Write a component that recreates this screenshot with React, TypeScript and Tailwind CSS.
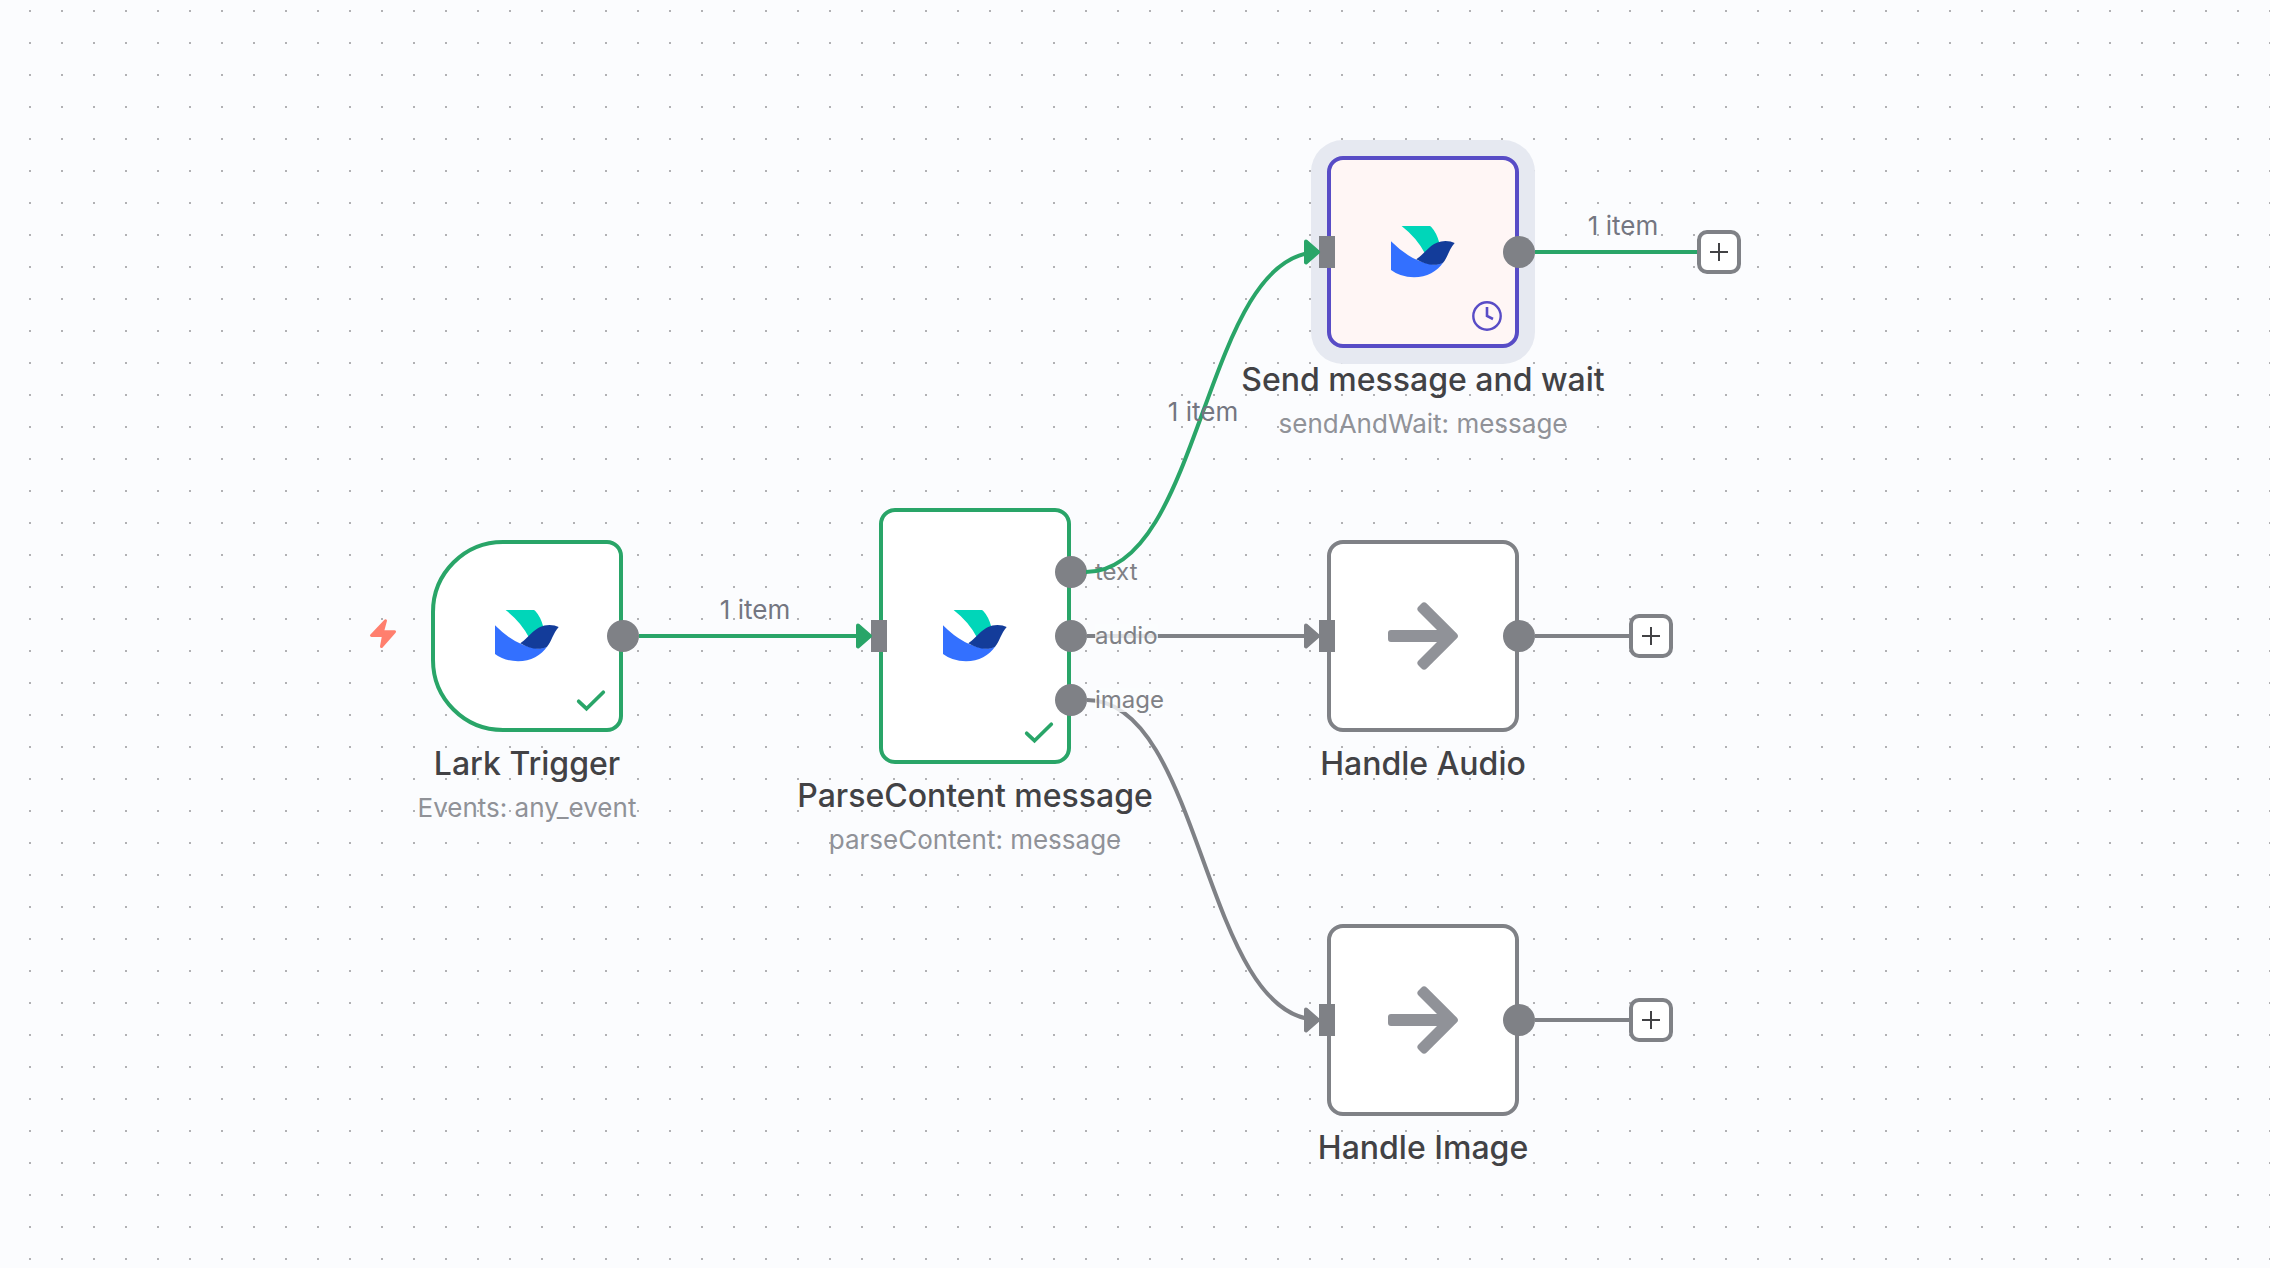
import React from 'react';

type Tone = 'success' | 'idle' | 'waiting';

const borderTone: Record<Tone, string> = {
  success: 'border-[#29a568]',
  idle: 'border-[#7f8186]',
  waiting: 'border-[#584cc6]',
};

function BirdIcon() {
  return (
    <svg className="size-16" viewBox="0 0 64 64" aria-hidden="true">
      <path d="M10.600 6H38.500Q39.500 6 40.300 7Q45.500 12.500 48.200 22.500L34 33.500Q26 18 10.600 6Z" fill="#00d6b9" />
      <path d="M0 21.300Q21 42.500 43 44.500Q50 44.500 52.500 42C46 51.500 36 57.300 23 57.300Q9 57 0 50Z" fill="#3370ff" />
      <path d="M25.300 39.300C35 33 40 21 54.500 21Q60 21 63.700 23C58 29 56.500 38 52 42.700C45 46.500 34 45 25.300 39.300Z" fill="#133c9a" />
    </svg>
  );
}

function ArrowIcon() {
  return (
    <svg className="size-20" viewBox="0 0 80 80" fill="#909298" aria-hidden="true">
      <path d="M8 34H54L35.500 15.500Q33 13 35.500 10.500L38.500 7.500Q41 5 43.700 7.500L74 37.700Q76 40 74 42.300L43.700 72.500Q41 75 38.500 72.500L35.500 69.500Q33 67 35.500 64.500L54 46H8Q5 46 5 43V37Q5 34 8 34Z" />
    </svg>
  );
}

function CheckIcon() {
  return (
    <svg className="size-8" viewBox="0 0 32 32" fill="none" stroke="#29a568" strokeWidth="3.700" strokeLinecap="round" aria-hidden="true">
      <path d="M3.700 17.300L11.500 24.700L28.300 8.300" />
    </svg>
  );
}

function ClockIcon() {
  return (
    <svg className="size-8" viewBox="0 0 32 32" fill="none" stroke="#584cc6" aria-hidden="true">
      <circle cx="16" cy="16" r="13.700" strokeWidth="2.400" />
      <path d="M16 7V16L22 19" strokeWidth="2.600" />
    </svg>
  );
}

function BoltIcon() {
  return (
    <svg className="size-8" viewBox="0 0 32 32" fill="#ff7f6e" stroke="#ff7f6e" strokeWidth="3" strokeLinejoin="round" aria-hidden="true">
      <path d="M18.500 2.700L4.500 17.500H16.500L14.500 28.500L27.500 13.700H15.500Z" />
    </svg>
  );
}

interface NodeProps {
  place: string;
  title: string;
  subtitle?: string;
  tone: Tone;
  shape?: string;
  input?: boolean;
  outputs?: string[];
  icon: React.ReactNode;
  status?: React.ReactNode;
}

function FlowNode({ place, title, subtitle, tone, shape = 'h-48 rounded-2xl bg-white', input = true, outputs = [''], icon, status }: NodeProps) {
  return (
    <article className={`absolute flex w-48 flex-col items-center ${place}`}>
      <div className={`relative flex w-full items-center justify-center border-4 ${borderTone[tone]} ${shape}`}>
        {icon}
        {status && <span className="absolute right-3 bottom-3">{status}</span>}
        {input && <span className="absolute top-1/2 -left-3 h-8 w-4 -translate-y-1/2 bg-[#7f8186]" />}
        <div className="absolute inset-y-0 -right-5 flex flex-col justify-center gap-8">
          {outputs.map((name) => (
            <div key={name} className="relative size-8 rounded-full bg-[#7f8186]">
              {name && (
                <span className={`absolute top-1 left-10 h-6 text-2xl leading-6 text-[#7f8186] ${name === 'text' ? '' : 'bg-[#fbfcfe]/80'}`}>
                  {name}
                </span>
              )}
            </div>
          ))}
        </div>
      </div>
      <h2 className="mt-3 text-[32px] leading-10 font-medium whitespace-nowrap text-[#424245]">{title}</h2>
      {subtitle && <p className="mt-2 text-[26px] leading-8 whitespace-nowrap text-[#909298]">{subtitle}</p>}
    </article>
  );
}

function Edge({ d, tip, color }: { d: string; tip: [number, number]; color: string }) {
  const [x, y] = tip;
  return (
    <g stroke={color} fill="none">
      <path d={d} strokeWidth="4" />
      <path d={`M${x - 12} ${y - 10.5}L${x} ${y}L${x - 12} ${y + 10.5}Z`} fill={color} strokeWidth="4" strokeLinejoin="round" />
    </g>
  );
}

function AddButton({ place }: { place: string }) {
  return (
    <button type="button" aria-label="Add node" className={`absolute flex size-11 items-center justify-center rounded-[10px] border-4 border-[#7f8186] bg-white ${place}`}>
      <svg className="size-5" viewBox="0 0 20 20" stroke="#424245" strokeWidth="2" aria-hidden="true">
        <path d="M1 10H19M10 1V19" />
      </svg>
    </button>
  );
}

function ItemCount({ place }: { place: string }) {
  return <span className={`absolute -translate-x-1/2 text-[26px] leading-8 whitespace-nowrap text-[#747681] ${place}`}>1 item</span>;
}

export default function App() {
  return (
    <main className="relative min-h-screen w-full overflow-hidden bg-[#fbfcfe] font-['Inter',sans-serif]">
      <svg className="absolute inset-0 h-full w-full" aria-hidden="true">
        <defs>
          <pattern id="dots" x="29" y="10" width="32" height="32" patternUnits="userSpaceOnUse">
            <rect width="2" height="2" fill="#b1b1b4" />
          </pattern>
        </defs>
        <rect width="100%" height="100%" fill="url(#dots)" />
        <Edge d="M1087 636H1310" tip={[1318, 636]} color="#7f8186" />
        <Edge d="M1087 700C1203 700 1203 1020 1319 1020" tip={[1318, 1020]} color="#7f8186" />
        <path d="M1535 636H1632M1535 1020H1632" stroke="#7f8186" strokeWidth="4" />
        <path d="M1535 252H1700" stroke="#29a568" strokeWidth="4" />
      </svg>

      <FlowNode place="top-[540px] left-[431px]" title="Lark Trigger" subtitle="Events: any_event" tone="success" shape="h-48 rounded-l-[72px] rounded-r-2xl bg-white" input={false} icon={<BirdIcon />} status={<CheckIcon />} />
      <FlowNode place="top-[508px] left-[879px]" title="ParseContent message" subtitle="parseContent: message" tone="success" shape="h-64 rounded-2xl bg-white" outputs={['text', 'audio', 'image']} icon={<BirdIcon />} status={<CheckIcon />} />
      <FlowNode place="top-[156px] left-[1327px]" title="Send message and wait" subtitle="sendAndWait: message" tone="waiting" shape="h-48 rounded-2xl bg-[#fff6f5] shadow-[0_0_0_16px_#e6e9f1]" icon={<BirdIcon />} status={<ClockIcon />} />
      <FlowNode place="top-[540px] left-[1327px]" title="Handle Audio" tone="idle" icon={<ArrowIcon />} />
      <FlowNode place="top-[924px] left-[1327px]" title="Handle Image" tone="idle" icon={<ArrowIcon />} />

      <svg className="pointer-events-none absolute inset-0 h-full w-full" aria-hidden="true">
        <Edge d="M639 636H862" tip={[870, 636]} color="#29a568" />
        <Edge d="M1086 572C1203 572 1203 252 1319 252" tip={[1318, 252]} color="#29a568" />
      </svg>

      <span className="absolute top-[618px] left-[367px]">
        <BoltIcon />
      </span>
      <ItemCount place="top-[594px] left-[755px]" />
      <ItemCount place="top-[396px] left-[1203px]" />
      <ItemCount place="top-[210px] left-[1623px]" />
      <AddButton place="top-[230px] left-[1697px]" />
      <AddButton place="top-[614px] left-[1629px]" />
      <AddButton place="top-[998px] left-[1629px]" />
    </main>
  );
}
